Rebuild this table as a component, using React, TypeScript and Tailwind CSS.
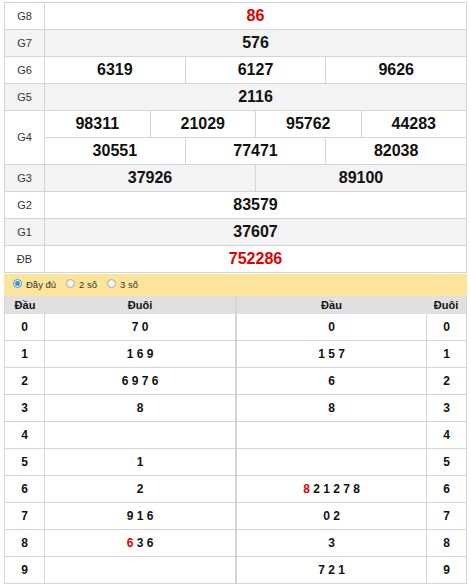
import React from 'react';

type Cell = { v: string; red?: boolean };

const font = { fontFamily: '"Liberation Sans", Arial, sans-serif' };

const prizes: { label: string; rows: Cell[][]; gray?: boolean }[] = [
  { label: 'G8', rows: [[{ v: '86', red: true }]] },
  { label: 'G7', rows: [[{ v: '576' }]], gray: true },
  { label: 'G6', rows: [[{ v: '6319' }, { v: '6127' }, { v: '9626' }]] },
  { label: 'G5', rows: [[{ v: '2116' }]], gray: true },
  {
    label: 'G4',
    rows: [
      [{ v: '98311' }, { v: '21029' }, { v: '95762' }, { v: '44283' }],
      [{ v: '30551' }, { v: '77471' }, { v: '82038' }],
    ],
  },
  { label: 'G3', rows: [[{ v: '37926' }, { v: '89100' }]], gray: true },
  { label: 'G2', rows: [[{ v: '83579' }]] },
  { label: 'G1', rows: [[{ v: '37607' }]], gray: true },
  { label: 'ĐB', rows: [[{ v: '752286', red: true }]] },
];

// [red prefix, rest]
const dauLeft: [string, string][] = [
  ['', '7 0'], ['', '1 6 9'], ['', '6 9 7 6'], ['', '8'], ['', ''],
  ['', '1'], ['', '2'], ['', '9 1 6'], ['6', ' 3 6'], ['', ''],
];
const duoiRight: [string, string][] = [
  ['', '0'], ['', '1 5 7'], ['', '6'], ['', '8'], ['', ''],
  ['', ''], ['8', ' 2 1 2 7 8'], ['', '0 2'], ['', '3'], ['', '7 2 1'],
];

const Radio = ({ checked, label }: { checked?: boolean; label: string }) => (
  <div className="flex items-center gap-[4px]">
    <span
      className={
        checked
          ? 'w-[9px] h-[9px] rounded-full border border-[#3d8fd6] bg-white flex items-center justify-center -mt-[3px]'
          : 'w-[9px] h-[9px] rounded-full border border-[#a8a8a8] bg-[#f4f4f4] -mt-[3px]'
      }
    >
      {checked && <span className="w-[5px] h-[5px] rounded-full bg-[#3d8fd6]" />}
    </span>
    <span className="text-[9.5px] text-[#333] leading-none">{label}</span>
  </div>
);

const Digits = ({ d }: { d: [string, string] }) => (
  <span className="whitespace-pre">
    {d[0] && <span className="text-[#e00000]">{d[0]}</span>}
    {d[1]}
  </span>
);

const App: React.FC = () => {
  return (
    <div className="w-[471px] h-[586px] bg-white pt-[2px] pl-[4px]" style={font}>
      {/* Bảng kết quả */}
      <div className="w-[463px] border-t border-l border-r border-[#d4d4d4]">
        {prizes.map((p) => (
          <div
            key={p.label}
            className={`flex border-b border-[#d4d4d4] ${p.gray ? 'bg-[#f3f3f3]' : 'bg-white'}`}
          >
            <div className="w-[40px] shrink-0 border-r border-[#d4d4d4] flex items-center justify-center text-[11px] text-[#333]">
              {p.label}
            </div>
            <div className="flex-1 flex flex-col">
              {p.rows.map((row, ri) => (
                <div
                  key={ri}
                  className={`flex h-[26px] ${ri > 0 ? 'border-t border-[#d4d4d4] h-[27px]' : ''}`}
                >
                  {row.map((c, ci) => (
                    <div
                      key={ci}
                      className={`flex-1 basis-0 flex items-center justify-center text-[16px] font-bold ${
                        ci > 0 ? 'border-l border-[#d4d4d4]' : ''
                      } ${c.red ? 'text-[#e00000]' : 'text-[#111]'}`}
                    >
                      {c.v}
                    </div>
                  ))}
                </div>
              ))}
            </div>
          </div>
        ))}
      </div>

      {/* Chọn kiểu hiển thị */}
      <div className="w-[463px] h-[22px] bg-[#fde49b] flex items-center pl-[9px] gap-[10px] mt-px">
        <Radio checked label="Đầy đủ" />
        <Radio label="2 số" />
        <Radio label="3 số" />
      </div>

      {/* Bảng lô tô */}
      <div className="flex w-[463px]">
        <div className="w-[232px] border-l border-r border-[#d4d4d4]">
          <div className="flex h-[18px] bg-[#e0e0e0] text-[11px] font-bold text-[#111]">
            <div className="w-[40px] flex items-center justify-center">Đầu</div>
            <div className="flex-1 flex items-center justify-center">Đuôi</div>
          </div>
          {dauLeft.map((d, i) => (
            <div key={i} className="flex h-[27px] border-b border-[#d4d4d4] text-[12px] font-bold text-[#111]">
              <div className="w-[40px] border-r border-[#d4d4d4] flex items-center justify-center">{i}</div>
              <div className="flex-1 flex items-center justify-center">
                <Digits d={d} />
              </div>
            </div>
          ))}
        </div>
        <div className="w-[231px] border-l border-r border-[#d4d4d4]">
          <div className="flex h-[18px] bg-[#e0e0e0] text-[11px] font-bold text-[#111]">
            <div className="flex-1 flex items-center justify-center">Đầu</div>
            <div className="w-[40px] flex items-center justify-center">Đuôi</div>
          </div>
          {duoiRight.map((d, i) => (
            <div key={i} className="flex h-[27px] border-b border-[#d4d4d4] text-[12px] font-bold text-[#111]">
              <div className="flex-1 flex items-center justify-center">
                <Digits d={d} />
              </div>
              <div className="w-[40px] border-l border-[#d4d4d4] flex items-center justify-center">{i}</div>
            </div>
          ))}
        </div>
      </div>
    </div>
  );
};

export default App;
